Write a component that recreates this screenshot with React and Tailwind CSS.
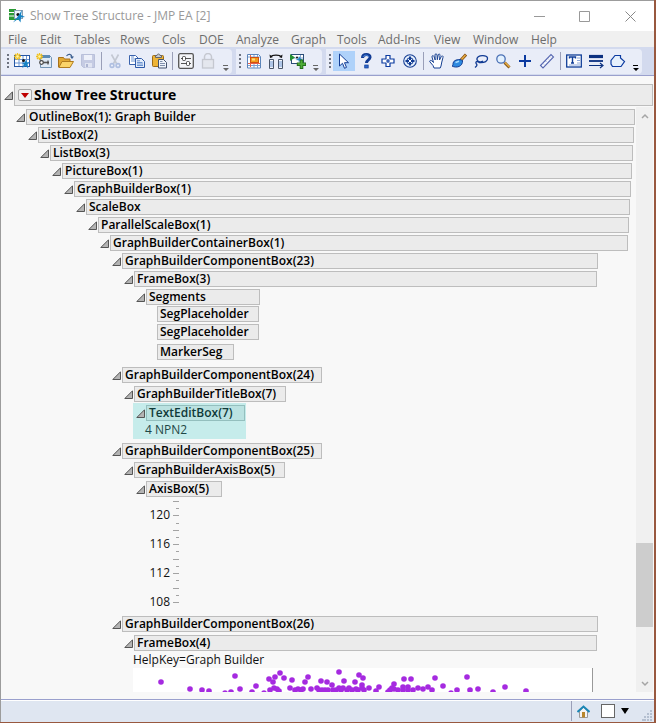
import React from "react";

const MENUS = [
  ["File", "w-8"], ["Edit", "w-[34px]"], ["Tables", "w-[46px]"], ["Rows", "w-[42px]"], ["Cols", "w-[37px]"],
  ["DOE", "w-[37px]"], ["Analyze", "w-[55px]"], ["Graph", "w-[46px]"], ["Tools", "w-[41px]"],
  ["Add-Ins", "w-14"], ["View", "w-[39px]"], ["Window", "w-[58px]"], ["Help", "w-8"],
];

const Spark = () => (
  <g>
    <path d="M3.500 0v7M0 3.500h7M1 1l5 5M6 1l-5 5" stroke="#f0c020" strokeWidth="1.300" />
    <circle cx="3.500" cy="3.500" r="1.300" fill="#fff3a0" />
  </g>
);
const Runner = ({ fill = "#1583c4" }) => (
  <path d="M12 6.500l1 3 3-.5-2.400 2 .6 4.500-2.400-2.800-3.600 2.200 1.800-3.600-2.200-1.300 3-.4z" fill={fill} />
);

const ICONS = {
  "New Data Table": (
    <>
      <rect x=".5" y="2.500" width="15" height="11" fill="#fff" stroke="#2456a5" />
      <path d="M1 6.500h14M1 10h14M5 3v10M9 3v10M12.500 3v10" stroke="#6d96d4" />
      <Spark /><circle cx="9.500" cy="7.500" r="1.500" fill="#111" /><Runner />
    </>
  ),
  "New Script": (
    <>
      <path d="M4.500 2.500h9l2 2v10h-11z" fill="#dfeaf6" stroke="#7395b5" />
      <path d="M4 2h10v3H4z" fill="#5b8bb5" /><Spark />
      <path d="M5 9.500h8" stroke="#555" strokeWidth="1.600" />
      <circle cx="5.500" cy="9.500" r="1.800" fill="#fff" stroke="#444" strokeWidth="1.200" /><path d="M12 7.500v4" stroke="#444" strokeWidth="1.200" />
    </>
  ),
  Open: (
    <>
      <path d="M.5 14V4.500h5l1 1.500h5.500v3" fill="#e2a932" stroke="#a8711a" />
      <path d="M.8 14.500L4 8.500h11.500l-3.500 6z" fill="#fbd468" stroke="#b07c1e" />
      <path d="M8.500 3c2-2.500 5-2 5.500 1" fill="none" stroke="#3c5f8f" strokeWidth="1.200" /><path d="M12 3.500h4l-2 2.500z" fill="#3c5f8f" />
    </>
  ),
  Save: (
    <>
      <path d="M1.500 1.500h13v13h-11l-2-2z" fill="#c5cbe3" stroke="#b9c0da" />
      <path d="M4 2h8v5H4z" fill="#eef1fa" /><path d="M5 10h7v4.500H5z" fill="#e1e5f2" /><path d="M6 11h2v3H6z" fill="#adb5d2" />
    </>
  ),
  Cut: (
    <>
      <path d="M4.500 1.500l5 9M11.500 1.500l-5 9" stroke="#c3c8d2" strokeWidth="1.600" />
      <g fill="none" stroke="#afbfe0" strokeWidth="1.600"><circle cx="5" cy="12.500" r="1.900" /><circle cx="11" cy="12.500" r="1.900" /></g>
    </>
  ),
  Copy: (
    <>
      <path d="M.5 2.500h6l2.500 2.500v6.500H.5z" fill="#fff" stroke="#3a63ad" />
      <path d="M2 6h5M2 8h5M2 4h3" stroke="#6f95d1" />
      <path d="M6.500 5.500h6l3 3v6h-9z" fill="#e4eefb" stroke="#2f5aa8" />
      <path d="M8 9.500h5.500M8 11h6M8 12.500h6M8 7.800h3" stroke="#6f95d1" />
    </>
  ),
  Paste: (
    <>
      <rect x="1.500" y="2.500" width="11" height="11" rx="1" fill="#eeb436" stroke="#9d6b16" />
      <path d="M4.500 4.500v-2h1.500c0-2 3-2 3 0h1.500v2z" fill="#c8ccd3" stroke="#666" />
      <path d="M7.500 6.500h5l3 3v5.500h-8z" fill="#eef3fb" stroke="#44536e" />
      <path d="M9 10.500h5M9 12.500h5M9 8.500h2.500" stroke="#8090ad" />
    </>
  ),
  Preferences: (
    <>
      <rect x=".7" y=".7" width="14.600" height="14.600" rx="1.500" fill="#f4f5f8" stroke="#555" strokeWidth="1.300" />
      <path d="M3 5.500h10M3 10.500h10" stroke="#555" />
      <rect x="4.500" y="3.500" width="3" height="4" rx="1" fill="#fff" stroke="#444" /><rect x="8.500" y="8.500" width="3" height="4" rx="1" fill="#fff" stroke="#444" />
    </>
  ),
  Lock: (
    <>
      <rect x="2.500" y="6.500" width="11" height="8.500" fill="#e4e7ee" stroke="#c5c8d0" strokeWidth="1.300" />
      <path d="M4.500 6.500V4a3.500 3.500 0 0 1 7 0v2.500" fill="none" stroke="#c5c8d0" strokeWidth="1.500" />
    </>
  ),
  "Tabulate Data": (
    <>
      <path d="M1.500 1.500h11l2 2v11.500h-13z" fill="#fff" stroke="#5c85ba" />
      <path d="M2 12.500h12M2 4h12M8 2v13M11.500 2v13" stroke="#7c9fd0" />
      <path d="M4.500 14V2M2 10.500h12" stroke="#e8604a" /><rect x="4.500" y="4.500" width="8" height="5" fill="#f39a1b" stroke="#d0500f" /><path d="M6 5.500h3v2H6z" fill="#ffe07a" />
    </>
  ),
  "Join Columns": (
    <>
      <path d="M3 4c1-2.500 9-2.500 10 0" fill="none" stroke="#111" strokeWidth="1.300" /><path d="M1.500 1.500l.5 3.500 3-1zM14.500 1.500l-.5 3.500-3-1z" fill="#111" />
      <path d="M1.500 6.500h4v9h-4zM10.500 6.500h4v9h-4z" fill="#f2f5fa" stroke="#49566b" />
      <path d="M2 9h3M2 11h3M2 13h3M11 9h3M11 11h3M11 13h3" stroke="#6d96d4" />
    </>
  ),
  "Add Table": (
    <>
      <rect x="1.500" y="1.500" width="12" height="9" fill="#fff" stroke="#2b4d78" /><path d="M3 5h10M10.500 2v8" stroke="#87a8d0" />
      <path d="M0 1l5 3.500L0 8z" fill="#259032" /><path d="M9 3l-.5 2.500-3 1.500 3 .3.500 2.500 1-2.500 3-.5-2.500-1.300z" fill="#2487c6" /><circle cx="7" cy="4.500" r="1" fill="#111" />
      <path d="M11.500 6.500v9.500M6.800 11.200h9.400" stroke="#256f1c" strokeWidth="3.600" /><path d="M11.500 7.500v7.500M7.800 11.200h7.400" stroke="#4fae38" strokeWidth="1.800" />
    </>
  ),
  Arrow: <path d="M3.500 1v12l3-2.700 2 5 2-.9-2-4.700h4z" fill="#fff" stroke="#123c94" />,
  Help: (
    <>
      <path d="M4.500 5c0-4.500 8-4.500 7.500-.5-.2 2.500-3.500 2.300-3.500 5.500" fill="none" stroke="#123c94" strokeWidth="3" />
      <path d="M5 4c1-2.500 5-2.500 6 0" fill="none" stroke="#4f8ae0" />
      <rect x="6.700" y="12" width="3.500" height="3" fill="#2d66c9" stroke="#123c94" strokeWidth=".7" />
    </>
  ),
  Crosshair: (
    <>
      <path d="M6 2.500h4V6h4v4h-4v3.500H6V10H2V6h4z" fill="#fff" stroke="#0b3aa0" strokeWidth="1.200" />
      <path d="M8 6v4M6 8h4" stroke="#0b3aa0" strokeWidth="1.200" />
    </>
  ),
  Scroller: (
    <>
      <circle cx="8" cy="8" r="6.300" fill="#e5effc" stroke="#173f94" strokeWidth="1.100" />
      <path d="M8 3.500v9M3.500 8h9" stroke="#123c94" strokeWidth="2" /><circle cx="8" cy="8" r="3.200" fill="none" stroke="#123c94" /><rect x="7" y="7" width="2" height="2" fill="#fff" />
    </>
  ),
  Grabber: <path d="M5 15L4 12.500 1 9C0 7.500 2 7 3 8l1.500 1.500L3 4c-.3-1.600 1.500-1.800 2-.5L6.200 7 6 2c0-1.600 1.900-1.600 2 0l.3 4.700L9.200 2c.3-1.400 2-1.200 1.800.3L10.500 7l1.800-3.500c.7-1.200 2.200-.5 1.700.8L12.800 9l-.8 4-.8 2z" fill="#fff" stroke="#164092" />,
  Brush: (
    <>
      <path d="M15 1.500L9.500 7.500" stroke="#8a5213" strokeWidth="3" /><path d="M14.500 2L10 7" stroke="#eab044" strokeWidth="1.300" />
      <path d="M11.500 7.500c.5 6-6 8-10.500 5.500 1.500-.3.500-2 1.500-4s6-3.500 9-1.500z" fill="#2e8ae0" stroke="#123c94" /><path d="M4.500 9.500l3.500-1.200" stroke="#a9dcff" strokeWidth="1.500" />
    </>
  ),
  Lasso: <path d="M6 9.500c6 .5 9-1.500 8.500-4.500C13.500 1.500 5 2 4 5.500c-.6 3 4 4.500 6 2.500M6 9.500c-1.500-2-4-.5-2.800 1C4.500 12 4 13 2 14.500" fill="none" stroke="#123c94" strokeWidth="1.300" />,
  Magnifier: (
    <>
      <path d="M9.500 9.500l5 5" stroke="#8a5a1a" strokeWidth="3" /><path d="M10 9.500l4.500 4.500" stroke="#eab044" strokeWidth="1.200" />
      <circle cx="6" cy="6" r="4.200" fill="#e2f1ff" stroke="#4a70b5" strokeWidth="1.300" />
    </>
  ),
  Plus: <path d="M8 2v12M2 8h12" stroke="#0b3aa0" strokeWidth="2" />,
  Ruler: (
    <>
      <path d="M1.500 12.500L12 1.500l2.500 2.500L4 15z" fill="#f8faff" stroke="#5566b0" strokeWidth="1.100" />
      <path d="M4 10.500l1 1M6.500 8l1 1M9 5.500l1 1M11 3.500l1 1" stroke="#8a97cc" strokeWidth=".8" />
    </>
  ),
  Annotate: (
    <>
      <rect x=".7" y="2" width="14.600" height="12" fill="#fff" stroke="#0f3d98" strokeWidth="1.300" />
      <path d="M3.500 5.500V4h6v1.500M6.500 4v6M5 10h3" stroke="#0f3d98" strokeWidth="1.400" fill="none" /><path d="M11 5h3M11 7.500h3M11 10h3M3 12h11" stroke="#8aa5d8" />
    </>
  ),
  Line: (
    <>
      <path d="M1 3.500h14" stroke="#0b3080" strokeWidth="3.200" /><path d="M1 8h14" stroke="#0b3080" strokeWidth="1.800" />
      <path d="M1 12.500h13M12 10l3 2.500-3 2.500" stroke="#0b3080" strokeWidth="1.200" fill="none" />
    </>
  ),
  Polygon: <path d="M5 2.500h5.500V5l4 3.500-3.500 5H2.500L1 11V7.500z" fill="#e6f0fc" stroke="#0b3aa0" strokeWidth="1.200" />,
};

const SECTIONS = [
  ["New Data Table", "New Script", "Open", "Save", null, "Cut", "Copy", "Paste", null, "Preferences", "Lock"],
  ["Tabulate Data", "Join Columns", "Add Table"],
  ["Arrow", "Help", "Crosshair", "Scroller", null, "Grabber", "Brush", "Lasso", "Magnifier", "Plus", "Ruler", null, "Annotate", "Line", "Polygon"],
];

function ToolSection({ items, grip, more }) {
  return (
    <div className="flex h-[25px] items-center rounded-r bg-[#e9edf8]">
      <div className={`${grip} flex shrink-0 flex-col items-end gap-[2px] pr-[2px]`}>
        {[0, 1, 2, 3].map((i) => <span key={i} className="size-[2px] bg-[#6d7380]" />)}
      </div>
      {items.map((name, i) =>
        name === null ? (
          <span key={i} className="mx-[2px] h-[18px] w-px bg-[#9a9fb8]" />
        ) : (
          <button key={i} aria-label={name} className={`flex h-5 w-[22px] items-center justify-center ${name === "Arrow" ? "bg-[#afd2fa]" : ""}`}>
            <svg width="16" height="16" viewBox="0 0 16 16" fill="none">{ICONS[name]}</svg>
          </button>
        )
      )}
      <button aria-label="Toolbar options" className={`flex h-full w-[13px] items-end justify-center pb-[3px] ${more}`}>
        <svg width="6" height="6" viewBox="0 0 6 6" fill="currentColor"><path d="M0 0h5v1H0zM0 3h6L3 6z" /></svg>
      </button>
    </div>
  );
}

function Triangle({ label }) {
  return (
    <button aria-label={`Toggle ${label}`} className="flex w-[10px] shrink-0 items-center">
      <svg width="9" height="9" viewBox="0 0 9 9"><path d="M8.500 .8v7.700H.8z" fill="#b4b4b4" stroke="#555" /></svg>
    </button>
  );
}

const BOX = "h-4 border pl-[2px] text-[12px] leading-[14px] font-semibold whitespace-nowrap";

function Node({ label, className = "", box = "border-[#bdbdbd] bg-[#ebebeb] text-black", children }) {
  return (
    <section className={className}>
      <div className="flex">
        <Triangle label={label} />
        <h2 className={`${BOX} ${box} min-w-0 flex-1`}>{label}</h2>
      </div>
      {children && <div className="pt-[2px] pr-px pl-3">{children}</div>}
    </section>
  );
}

const Leaf = ({ label, className }) => (
  <div className={`${BOX} border-[#bdbdbd] bg-[#ebebeb] ${className}`}>{label}</div>
);

const TICKS = [4, 11, 18, 26, 33, 40, 47, 54, 62, 69, 76, 83, 91, 98, 105];
const LABELS = [[120, 18], [116, 47], [112, 76], [108, 105]];

function Axis() {
  return (
    <svg width="46" height="119" className="block" role="img" aria-label="Axis">
      {TICKS.map((y, i) => <path key={y} d={`M${i % 2 ? 40 : 37} ${y + 0.5}H43`} stroke="#a3a3a3" />)}
      {LABELS.map(([n, y]) => (
        <text key={n} x="34" y={y + 4} textAnchor="end" className="fill-[#111] text-[12px]">{n}</text>
      ))}
    </svg>
  );
}

const POINTS = [
  [28, 14], [57, 21], [69, 22], [76, 23], [102, 8], [98, 24], [92, 25], [107, 21], [123, 18], [136, 11], [142, 9], [147, 5], [151, 10],
  [140, 14], [159, 12], [157, 20], [172, 14], [175, 9], [188, 13], [194, 14], [199, 17], [206, 4], [211, 13], [222, 14],
  [226, 7], [230, 10], [229, 17], [236, 20], [246, 19], [261, 16], [271, 11], [278, 11], [302, 10], [310, 18], [295, 19],
  [299, 22], [285, 20], [137, 22], [141, 20], [144, 21], [146, 23], [162, 22], [165, 21], [168, 22], [170, 21], [178, 21],
  [184, 20], [186, 22], [189, 22], [192, 22], [195, 22], [200, 22], [203, 22], [206, 20], [210, 20], [208, 22], [216, 20],
  [214, 22], [219, 22], [223, 21], [225, 22], [229, 20], [231, 22], [243, 23], [259, 20], [261, 21], [257, 22], [265, 22],
  [270, 19], [275, 19], [270, 22], [275, 22], [280, 22], [290, 21], [119, 24], [131, 25], [255, 24], [324, 22], [318, 25],
  [337, 22], [345, 21], [360, 24], [334, 9], [372, 19], [393, 23],
];

function Scatter() {
  return (
    <svg width="460" height="24" className="block bg-white" role="img" aria-label="Scatter plot">
      {POINTS.map(([x, y], i) => <circle key={i} cx={x} cy={y} r="2.800" fill="#a52ae0" />)}
      <path d="M459.500 0v24" stroke="#999" />
    </svg>
  );
}

export default function App() {
  return (
    <div className="h-screen bg-[#98583f] pr-[2px] pb-px font-['Open_Sans','Noto_Sans',sans-serif] text-[12px]">
      <div className="flex h-full flex-col border-t border-l border-[#9c9c9c] bg-[#f8f8f8]">
        <header className="flex h-[30px] shrink-0 items-center bg-white pl-[7px]">
          <svg width="18" height="16" viewBox="0 0 18 16" className="mr-1">
            <path d="M1 1h7v3h3v8H1z" fill="#2b9a35" /><path d="M0 4.500h9M0 8h9" stroke="#fff" />
            <rect x="6.500" y="2.500" width="8" height="8" fill="#edf5fb" stroke="#8aa0b4" />
            <circle cx="10" cy="6.500" r="1.600" fill="#111" /><path d="M14 2l-1 5 4 2-4 .5-.5 5-2.500-3.500-5 3.500 4-5z" fill="#1583c4" />
          </svg>
          <h1 className="flex-1 text-[12px] leading-4 text-[#999]">Show Tree Structure - JMP EA [2]</h1>
          <button aria-label="Minimize" className="flex w-[45px] justify-center"><svg width="11" height="11"><path d="M0 5.500h11" stroke="#999" /></svg></button>
          <button aria-label="Maximize" className="flex w-[45px] justify-center"><svg width="11" height="11"><path d="M.5.5h10v10H.5z" fill="none" stroke="#999" /></svg></button>
          <button aria-label="Close" className="flex w-[47px] justify-center"><svg width="11" height="11"><path d="M.5.5l10 10M10.500.5l-10 10" stroke="#888" /></svg></button>
        </header>
        <nav className="flex h-4 shrink-0 items-center bg-[#f0f0f0] pt-[2px] pl-[7px] text-[#6d6d6d]">
          {MENUS.map(([name, width]) => <button key={name} className={`${width} text-left leading-4`}>{name}</button>)}
        </nav>
        <div className="flex h-7 shrink-0 items-center gap-1 bg-[#d3daee]">
          <ToolSection items={SECTIONS[0]} grip="w-[10px]" more="text-[#666]" />
          <ToolSection items={SECTIONS[1]} grip="w-[7px]" more="text-[#666]" />
          <ToolSection items={SECTIONS[2]} grip="w-[7px]" more="text-black" />
        </div>
        <main className="flex min-h-0 flex-1 flex-col border-t border-[#9aa0cd] pt-2">
          <div className="flex shrink-0 items-center pr-px pl-[3px]">
            <Triangle label="Show Tree Structure" />
            <div className="flex h-[22px] flex-1 items-center border border-[#bdbdbd] bg-[#ebebeb] pl-[3px]">
              <button aria-label="Options" className="mr-[2px] flex h-3 w-[14px] items-center justify-center rounded-[2px] border border-[#a8a8a8] bg-[#f3f3f3]">
                <svg width="8" height="5"><path d="M0 0h8L4 5z" fill="#c00000" /></svg>
              </button>
              <h2 className="text-[14px] leading-5 font-bold">Show Tree Structure</h2>
            </div>
          </div>
          <div className="mb-[7px] flex min-h-0 flex-1">
            <div className="min-w-0 flex-1 overflow-hidden pt-[3px] pr-px pl-[15px]">
              <Node label="OutlineBox(1): Graph Builder">
                <Node label="ListBox(2)">
                  <Node label="ListBox(3)">
                    <Node label="PictureBox(1)">
                      <Node label="GraphBuilderBox(1)">
                        <Node label="ScaleBox">
                          <Node label="ParallelScaleBox(1)">
                            <Node label="GraphBuilderContainerBox(1)">
                              <Node label="GraphBuilderComponentBox(23)" className="w-[486px]">
                                <Node label="FrameBox(3)">
                                  <Node label="Segments" className="w-[124px]" />
                                  <div className="pt-px pl-[21px]">
                                    <Leaf label="SegPlaceholder" className="w-[102px]" />
                                    <Leaf label="SegPlaceholder" className="mt-[2px] w-[102px]" />
                                    <Leaf label="MarkerSeg" className="mt-1 w-[77px]" />
                                  </div>
                                </Node>
                              </Node>
                              <Node label="GraphBuilderComponentBox(24)" className="mt-[7px] w-[210px]">
                                <Node label="GraphBuilderTitleBox(7)" className="mt-px w-[162px]" />
                                <div className="mt-px ml-[9px] h-9 w-[113px] bg-[#c6eceb] pt-[2px] pr-px pl-[3px] text-[#1f4746]">
                                  <Node label="TextEditBox(7)" box="border-[#94bfbe] bg-[#bbe2e1] text-[#0f3a39]" />
                                  <p className="pl-[9px] leading-[18px]">4 NPN2</p>
                                </div>
                              </Node>
                              <Node label="GraphBuilderComponentBox(25)" className="mt-1 w-[210px]">
                                <Node label="GraphBuilderAxisBox(5)" className="mt-px w-[161px]">
                                  <Node label="AxisBox(5)" className="mt-px w-[86px]" />
                                  <Axis />
                                </Node>
                              </Node>
                              <Node label="GraphBuilderComponentBox(26)" className="w-[486px]">
                                <Node label="FrameBox(4)" className="mt-px" />
                                <div className="pl-[9px]">
                                  <p className="leading-[17px] text-[#111]">HelpKey=Graph Builder</p>
                                  <Scatter />
                                </div>
                              </Node>
                            </Node>
                          </Node>
                        </Node>
                      </Node>
                    </Node>
                  </Node>
                </Node>
              </Node>
            </div>
            <div className="mt-px mr-px flex w-[17px] shrink-0 flex-col bg-[#f0f0f0]">
              <button aria-label="Scroll up" className="flex h-[17px] items-center justify-center"><svg width="8" height="6"><path d="M1 5l3-3 3 3" fill="none" stroke="#a5a5a5" strokeWidth="1.500" /></svg></button>
              <div className="grow-[419] basis-0" />
              <div className="h-[84px] bg-[#cdcdcd]" />
              <div className="grow-[48] basis-0" />
              <button aria-label="Scroll down" className="flex h-[17px] items-center justify-center"><svg width="8" height="6"><path d="M1 1l3 3 3-3" fill="none" stroke="#a5a5a5" strokeWidth="1.500" /></svg></button>
            </div>
          </div>
        </main>
        <footer className="flex h-[23px] shrink-0 items-center justify-end border-t border-[#9aa0cd] bg-[#dfe6f1] shadow-[inset_0_1px_0_#fff]">
          <div className="flex h-5 items-center border-l border-[#9a9fb8] pl-[5px]">
            <button aria-label="Home window">
              <svg width="13" height="13" viewBox="0 0 13 13" className="block">
                <path d="M2.500 6v6.500h8V6L6.500 2z" fill="#f4f4f4" stroke="#999" /><path d="M5 7h3v5.500H5z" fill="#b8862b" />
                <path d="M.5 7l6-5.500 6 5.500" fill="none" stroke="#1b86b5" strokeWidth="2" />
              </svg>
            </button>
            <input type="checkbox" aria-label="Select window" className="ml-[11px] size-[14px] appearance-none border border-[#666] bg-white" />
            <button aria-label="Window list" className="ml-1.5"><svg width="8" height="6" className="block"><path d="M0 0h8L4 6z" /></svg></button>
            <svg width="11" height="11" className="mt-2 mr-px ml-[13px]" fill="#b4bfd0">
              {[[8, 0], [8, 3], [8, 6], [8, 9], [5, 3], [5, 6], [5, 9], [2, 6], [2, 9], [0, 9]].map(([x, y], i) => <rect key={i} x={x} y={y} width="2" height="2" />)}
            </svg>
          </div>
        </footer>
      </div>
    </div>
  );
}
